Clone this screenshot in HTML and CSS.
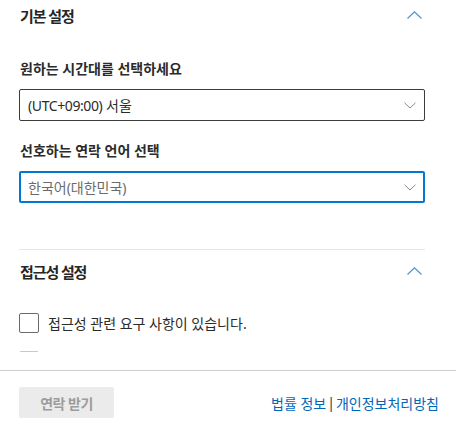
FILE: index.html
```html
<!DOCTYPE html>
<html lang="ko">
<head>
<meta charset="utf-8">
<link rel="stylesheet" href="styles.css">
</head>
<body>
<div class="page">
  <div class="scroll">
    <section class="group">
      <div class="group-head">
        <h2 class="group-title">기본 설정</h2>
        <svg class="chev-up" width="15" height="8" viewBox="0 0 15 8"><polyline points="0.5,7.5 7.5,0.8 14.5,7.5" fill="none" stroke="#4f94d4" stroke-width="1.2"/></svg>
      </div>
      <div class="field first">
        <div class="label">원하는 시간대를 선택하세요</div>
        <div class="select">
          <span class="value"><span class="latin">(UTC+09:00)</span> 서울</span>
          <svg class="chev-down" width="12" height="7" viewBox="0 0 12 7"><polyline points="0.5,0.8 6,6 11.5,0.8" fill="none" stroke="#8a8a8a" stroke-width="1"/></svg>
        </div>
      </div>
      <div class="field">
        <div class="label">선호하는 연락 언어 선택</div>
        <div class="select focused">
          <span class="value muted">한국어(대한민국)</span>
          <svg class="chev-down" width="12" height="7" viewBox="0 0 12 7"><polyline points="0.5,0.8 6,6 11.5,0.8" fill="none" stroke="#8a8a8a" stroke-width="1"/></svg>
        </div>
      </div>
    </section>
    <div class="divider"></div>
    <section class="group">
      <div class="group-head">
        <h2 class="group-title">접근성 설정</h2>
        <svg class="chev-up" width="15" height="8" viewBox="0 0 15 8"><polyline points="0.5,7.5 7.5,0.8 14.5,7.5" fill="none" stroke="#4f94d4" stroke-width="1.2"/></svg>
      </div>
      <div class="check first">
        <span class="box"></span>
        <span class="check-text">접근성 관련 요구 사항이 있습니다.</span>
      </div>
      <div class="check next">
        <span class="box light"></span>
        <span class="check-text"></span>
      </div>
    </section>
  </div>
  <footer class="footer">
    <button class="btn" disabled>연락 받기</button>
    <div class="links">
      <a class="link">법률 정보</a><span class="sep">|</span><a class="link">개인정보처리방침</a>
    </div>
  </footer>
</div>
</body>
</html>
```

FILE: styles.css
```css
* { box-sizing: border-box; }
html, body { margin: 0; padding: 0; background: #fff; }
body {
  font-family: "Noto Sans", "Noto Sans CJK KR", sans-serif;
  color: #333;
  width: 456px;
  height: 426px;
  overflow: hidden;
}
.page { display: flex; flex-direction: column; height: 426px; }
.scroll {
  height: 352px;
  overflow: hidden;
  padding: 0 31px 0 19px;
  flex: none;
}
.group-head {
  height: 32px;
  display: flex;
  align-items: center;
  justify-content: space-between;
  padding: 0 3px 0 1px;
}
.group-title {
  margin: 0;
  font-size: 15px;
  font-weight: 700;
  letter-spacing: -1.1px;
  color: #262626;
  line-height: 20px;
}
.chev-up { display: block; margin-top: -2px; }
.field { margin-top: 20px; }
.field.first { margin-top: 27px; }
.label {
  font-size: 14px;
  font-weight: 700;
  line-height: 20px;
  padding-left: 1px;
  color: #2b2b2b;
}
.select {
  margin-top: 10px;
  height: 32px;
  border: 1px solid #3c3c3c;
  border-radius: 2px;
  display: flex;
  align-items: center;
  justify-content: space-between;
  padding: 0 8px 0 8px;
}
.select.focused { border: 2px solid #0078d4; padding: 0 7px; }
.value {
  font-size: 14px;
  color: #2b2b2b;
}
.latin { letter-spacing: -0.4px; }
.value.muted { color: #6b6b6b; }
.chev-down { display: block; }
.divider { height: 1px; background: #e6e6e6; margin-top: 46px; }
.divider + .group .group-head { margin-top: 6px; }
.check { display: flex; align-items: center; height: 20px; }
.check.first { margin-top: 25px; }
.check.next { margin-top: 18px; }
.box {
  width: 20px; height: 20px;
  border: 1px solid #6b6b6b;
  border-radius: 2px;
  flex: none;
}
.box.light { border-color: #c8c8c8; }
.check-text {
  margin-left: 9px;
  font-size: 14px;
  color: #2b2b2b;
}
.footer {
  margin-top: 18px;
  border-top: 1px solid #cfcfcf;
  display: flex;
  align-items: center;
  justify-content: space-between;
  padding: 16px 17px 0 19px;
}
.btn {
  width: 95px; height: 31px;
  border: none;
  border-radius: 2px;
  background: #ebebeb;
  color: #9c9c9c;
  font-family: inherit;
  font-size: 14px;
  font-weight: 700;
  letter-spacing: -0.5px;
  padding: 0;
}
.links {
  font-size: 14px;
  display: flex;
  align-items: center;
}
.link { color: #0067b8; text-decoration: none; }
.sep { color: #333; margin: 0 1px 0 1px; }
```
